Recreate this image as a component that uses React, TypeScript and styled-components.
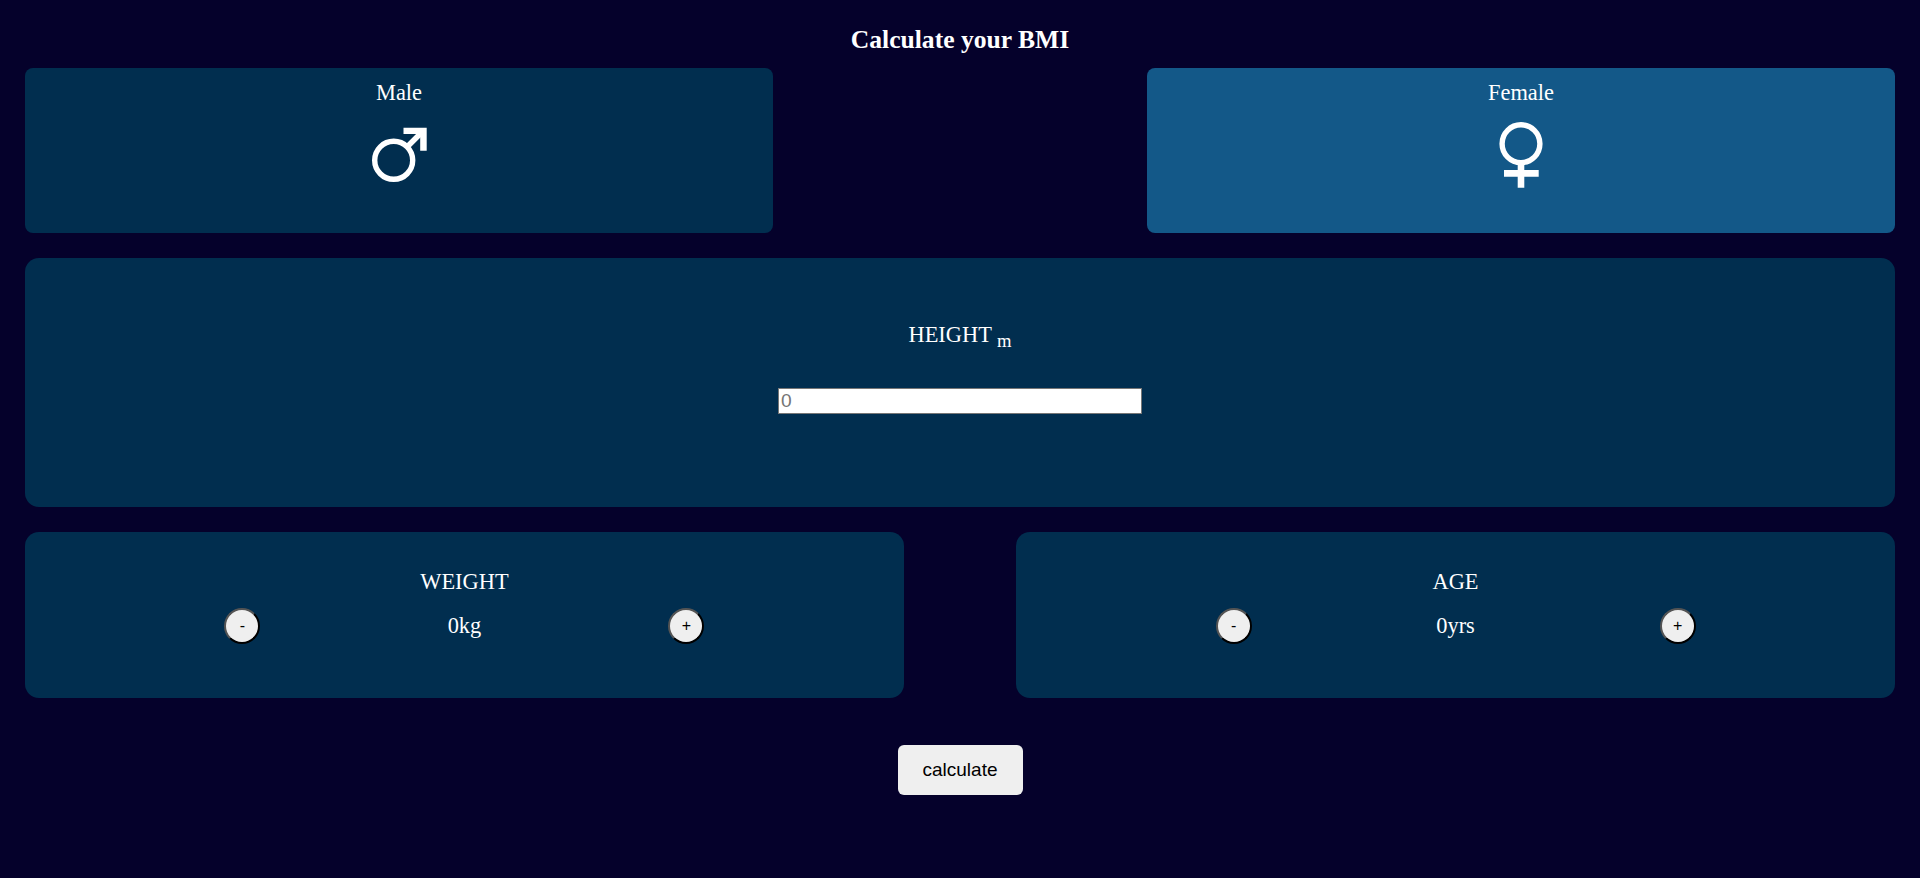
import React from 'react'
import styled, { createGlobalStyle } from 'styled-components';

const GlobalStyle = createGlobalStyle`
  html, body {
    margin: 0;
    padding: 0;
    height: 100%;
    background: #05012b;
  }
  body {
    overflow: hidden;
    font-family: "Liberation Serif", "Times New Roman", serif;
    color: #fff;
  }
`;

export default function App() {
  return (
    <Page>
      <GlobalStyle />
      <Title>Calculate your BMI</Title>

      <GenderRow>
        <GenderCard>
          <Label>Male</Label>
          <MaleIcon viewBox="0 0 55 56">
            <circle cx="21.7" cy="33.3" r="19" fill="none" stroke="#fff" strokeWidth="5.4" />
            <path d="M35 20 L50 5" stroke="#fff" strokeWidth="5.4" fill="none" />
            <path d="M31.5 .7 H54.7 V23.7 H48.2 V7 H31.5 Z" fill="#fff" />
          </MaleIcon>
        </GenderCard>
        <GenderCard $active>
          <Label>Female</Label>
          <FemaleIcon viewBox="0 0 44 66">
            <circle cx="22" cy="21.7" r="18.9" fill="none" stroke="#fff" strokeWidth="5.4" />
            <path d="M18.7 41 H25.3 V48 H39.7 V54.7 H25.3 V65.7 H18.7 V54.7 H5 V48 H18.7 Z" fill="#fff" />
          </FemaleIcon>
        </GenderCard>
      </GenderRow>

      <HeightCard>
        <Label>HEIGHT <sub>m</sub></Label>
        <HeightInput type="number" placeholder="0" />
      </HeightCard>

      <StepperRow>
        <StepperCard>
          <Label>WEIGHT</Label>
          <Stepper>
            <RoundButton>-</RoundButton>
            <Value>0kg</Value>
            <RoundButton>+</RoundButton>
          </Stepper>
        </StepperCard>
        <StepperCard>
          <Label>AGE</Label>
          <Stepper>
            <RoundButton>-</RoundButton>
            <Value>0yrs</Value>
            <RoundButton>+</RoundButton>
          </Stepper>
        </StepperCard>
      </StepperRow>

      <CalculateButton>calculate</CalculateButton>
    </Page>
  )
}

const Page = styled.div`
  display: flex;
  flex-direction: column;
  align-items: center;
  box-sizing: border-box;
  height: 878px;
  padding: 0 25px;
`;
const Title = styled.h1`
  margin: 0;
  height: 68px;
  line-height: 79px;
  font-size: 25.6px;
  font-weight: bold;
`;
const GenderRow = styled.div`
  display: flex;
  justify-content: space-between;
  width: 100%;
`;
const GenderCard = styled.div<{ $active?: boolean }>`
  display: flex;
  flex-direction: column;
  align-items: center;
  box-sizing: border-box;
  width: 40%;
  height: 165px;
  padding-top: 12px;
  border-radius: 8px;
  background: ${props => (props.$active ? '#135888' : '#012e4f')};
`;
const Label = styled.div`
  font-size: 22.4px;
  line-height: 25px;
`;
const MaleIcon = styled.svg`
  width: 55px;
  height: 56px;
  margin-top: 22px;
`;
const FemaleIcon = styled.svg`
  width: 44px;
  height: 66px;
  margin-top: 17px;
`;
const HeightCard = styled.div`
  display: flex;
  flex-direction: column;
  align-items: center;
  box-sizing: border-box;
  width: 100%;
  height: 249px;
  margin-top: 25px;
  padding-top: 64px;
  border-radius: 14px;
  background: #012e4f;
`;
const HeightInput = styled.input`
  box-sizing: border-box;
  width: 364px;
  height: 26px;
  margin-top: 35px;
  padding: 1px 2px;
  border: 1px solid #767676;
  background: #fff;
  font-family: "Liberation Sans", Arial, sans-serif;
  font-size: 19.2px;
  &::placeholder {
    color: #757575;
  }
`;
const StepperRow = styled.div`
  display: flex;
  justify-content: space-between;
  width: 100%;
  margin-top: 25px;
`;
const StepperCard = styled.div`
  display: flex;
  flex-direction: column;
  align-items: center;
  box-sizing: border-box;
  width: 47%;
  height: 166px;
  padding-top: 37px;
  border-radius: 14px;
  background: #012e4f;
`;
const Stepper = styled.div`
  display: flex;
  justify-content: space-between;
  align-items: center;
  width: 480px;
  margin-top: 14px;
`;
const Value = styled.span`
  font-size: 22.4px;
`;
const RoundButton = styled.button`
  box-sizing: border-box;
  width: 36px;
  height: 36px;
  padding: 0;
  border: 2px outset #000;
  border-radius: 50%;
  background: #efefef;
  color: #000;
  font-family: "Liberation Sans", Arial, sans-serif;
  font-size: 16px;
`;
const CalculateButton = styled.button`
  width: 125px;
  height: 50px;
  margin-top: 47px;
  padding: 0;
  border: none;
  border-radius: 6px;
  background: #efefef;
  color: #000;
  font-family: "Liberation Sans", Arial, sans-serif;
  font-size: 19px;
`;
